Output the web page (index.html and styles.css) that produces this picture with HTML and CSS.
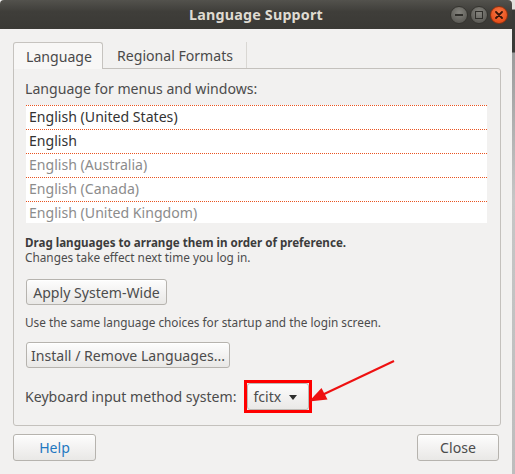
FILE: index.html
```html
<!DOCTYPE html>
<html lang="en">
<head>
<meta charset="utf-8">
<title>Language Support</title>
<link rel="stylesheet" href="styles.css">
</head>
<body>
<div class="screen">
  <div class="window">
    <div class="titlebar">
      <span class="title">Language Support</span>
      <div class="wm">
        <span class="wm-btn wm-min"><span class="glyph-min"></span></span>
        <span class="wm-btn wm-max"><span class="glyph-max"></span></span>
        <span class="wm-btn wm-close">
          <svg width="8" height="8" viewBox="0 0 8 8"><path d="M1 1L7 7M7 1L1 7" stroke="#3a1509" stroke-width="1.8" stroke-linecap="round"/></svg>
        </span>
      </div>
    </div>
    <div class="body">
      <div class="tabs">
        <div class="tab tab-active">Language</div>
        <div class="tab tab-idle">Regional Formats</div>
      </div>
      <div class="frame">
        <div class="label">Language for menus and windows:</div>
        <div class="list">
          <div class="row">English (United States)</div>
          <div class="row">English</div>
          <div class="row row-dim">English (Australia)</div>
          <div class="row row-dim">English (Canada)</div>
          <div class="row row-dim">English (United Kingdom)</div>
        </div>
        <div class="hint"><b>Drag languages to arrange them in order of preference.</b><br>Changes take effect next time you log in.</div>
        <button class="btn btn-apply">Apply System-Wide</button>
        <div class="hint hint-use">Use the same language choices for startup and the login screen.</div>
        <button class="btn btn-install">Install / Remove Languages...</button>
        <div class="kbd">
          <span class="kbd-label">Keyboard input method system:</span>
          <div class="mark">
            <div class="combo"><span>fcitx</span><span class="caret"></span></div>
          </div>
        </div>
      </div>
      <div class="actions">
        <button class="btn btn-help">Help</button>
        <button class="btn btn-close">Close</button>
      </div>
    </div>
  </div>
  <div class="strip"></div>
  <svg class="arrow" width="515" height="474" viewBox="0 0 515 474">
    <line x1="394" y1="361" x2="321" y2="395.5" stroke="#ee1111" stroke-width="2"/>
    <polygon points="309,401.5 327.5,399.5 321.5,388" fill="#ee1111"/>
  </svg>
</div>
</body>
</html>
```
FILE: styles.css
```css
* { box-sizing: border-box; }
html, body { margin: 0; padding: 0; }
body {
  font-family: "Noto Sans", "DejaVu Sans", sans-serif;
  font-size: 14.1px;
  color: #3c3c3c;
  background: #b4b4b4;
}
.screen {
  position: relative;
  width: 515px;
  height: 474px;
  display: flex;
  overflow: hidden;
}
.window {
  width: 512px;
  height: 474px;
  background: #f2f1f0;
  display: flex;
  flex-direction: column;
}
.strip {
  width: 3px;
  height: 474px;
  background: linear-gradient(#e2e0dc 0, #e2e0dc 9px, #3a3a37 10px, #3a3a37 52px, #9b9b9b 53px, #c6c6c6 200px, #bdbdbd 474px);
}
.titlebar {
  height: 29px;
  flex: none;
  display: grid;
  grid-template-columns: 1fr auto 1fr;
  align-items: center;
  background: linear-gradient(#53524d, #3f3e3a 40%, #3a3935);
  border-radius: 4px 4px 0 0;
}
.title {
  grid-column: 2;
  font-weight: 700;
  font-size: 14.3px;
  color: #dfdbd2;
  letter-spacing: 0.2px;
}
.wm {
  grid-column: 3;
  justify-self: end;
  display: flex;
  gap: 2px;
  padding-right: 4px;
}
.wm-btn {
  width: 18px;
  height: 18px;
  border-radius: 50%;
  display: flex;
  align-items: center;
  justify-content: center;
  background: radial-gradient(circle at 50% 35%, #85847e, #5f5e59 70%);
  border: 1px solid #35342f;
}
.wm-close {
  background: radial-gradient(circle at 50% 35%, #f77a48, #e8501c 70%);
  border-color: #8d3210;
}
.glyph-min {
  width: 8px;
  height: 2px;
  background: #2f2e2a;
}
.glyph-max {
  width: 8px;
  height: 8px;
  border: 1.5px solid #2f2e2a;
}
.body {
  flex: 1;
  display: flex;
  flex-direction: column;
  padding: 13px 11px 0 13px;
}
.tabs {
  display: flex;
  height: 27px;
  position: relative;
  z-index: 1;
  margin-bottom: -1px;
}
.tab {
  height: 27px;
  display: flex;
  align-items: center;
  color: #4a4a4a;
}
.tab-active {
  width: 90px;
  padding-left: 12px;
  background: #f8f7f6;
  border: 1px solid #c6c3bf;
  border-bottom: none;
  border-radius: 3px 3px 0 0;
}
.tab-idle {
  height: 26px;
  padding: 0 13px 0 14px;
  border-right: 1px solid #d9d7d3;
}
.frame {
  width: 488px;
  border: 1px solid #c4c1bd;
  border-radius: 0 3px 3px 3px;
  padding: 0 13px 12px 11px;
  display: flex;
  flex-direction: column;
  align-items: flex-start;
}
.label {
  margin-top: 10px;
  line-height: 20px;
  color: #4c4c4c;
}
.list {
  margin-top: 6px;
  margin-left: 1px;
  width: 461px;
  height: 118px;
  overflow: hidden;
  background: #ffffff;
}
.row {
  height: 24px;
  line-height: 22px;
  padding-left: 3px;
  border-top: 1px dotted #e95420;
  color: #333333;
}
.row-dim { color: #8c8c8c; }
.hint {
  margin-top: 12px;
  font-size: 11.8px;
  line-height: 15px;
  color: #4c4c4c;
}
.hint b { font-size: 11.6px; font-weight: 700; color: #3c3c3c; }
.hint-use {
  margin-top: 9px;
  line-height: 16px;
}
.btn {
  font-family: inherit;
  font-size: 14.1px;
  color: #4c4c4c;
  height: 26px;
  padding: 0;
  border: 1px solid #b6b3ae;
  border-radius: 3px;
  background: linear-gradient(#fdfdfd, #f1f0ef 60%, #e9e8e6);
  box-shadow: inset 0 1px 0 #ffffff;
  cursor: default;
}
.btn-apply {
  margin-top: 14px;
  margin-left: 1px;
  width: 141px;
}
.btn-install {
  margin-top: 12px;
  margin-left: 1px;
  width: 204px;
}
.kbd {
  margin-top: 12px;
  height: 33px;
  display: flex;
  align-items: center;
  gap: 7px;
  color: #4c4c4c;
}
.mark {
  border: 3px solid #ff0000;
}
.combo {
  width: 62px;
  height: 27px;
  display: flex;
  align-items: center;
  gap: 8px;
  padding-left: 6px;
  border: 1px solid #bdbab5;
  border-radius: 3px;
  background: linear-gradient(#fcfcfc, #f1f0ef 60%, #eae9e7);
  color: #4c4c4c;
}
.caret {
  width: 0;
  height: 0;
  border-left: 4.5px solid transparent;
  border-right: 4.5px solid transparent;
  border-top: 5px solid #2e2e2e;
  margin-top: 1px;
}
.actions {
  margin-top: 8px;
  display: flex;
  justify-content: space-between;
  padding-right: 2px;
}
.btn-help {
  width: 83px;
  height: 27px;
  color: #1f78c1;
}
.btn-close {
  width: 82px;
  height: 27px;
}
.arrow {
  position: absolute;
  left: 0;
  top: 0;
  pointer-events: none;
}
```
